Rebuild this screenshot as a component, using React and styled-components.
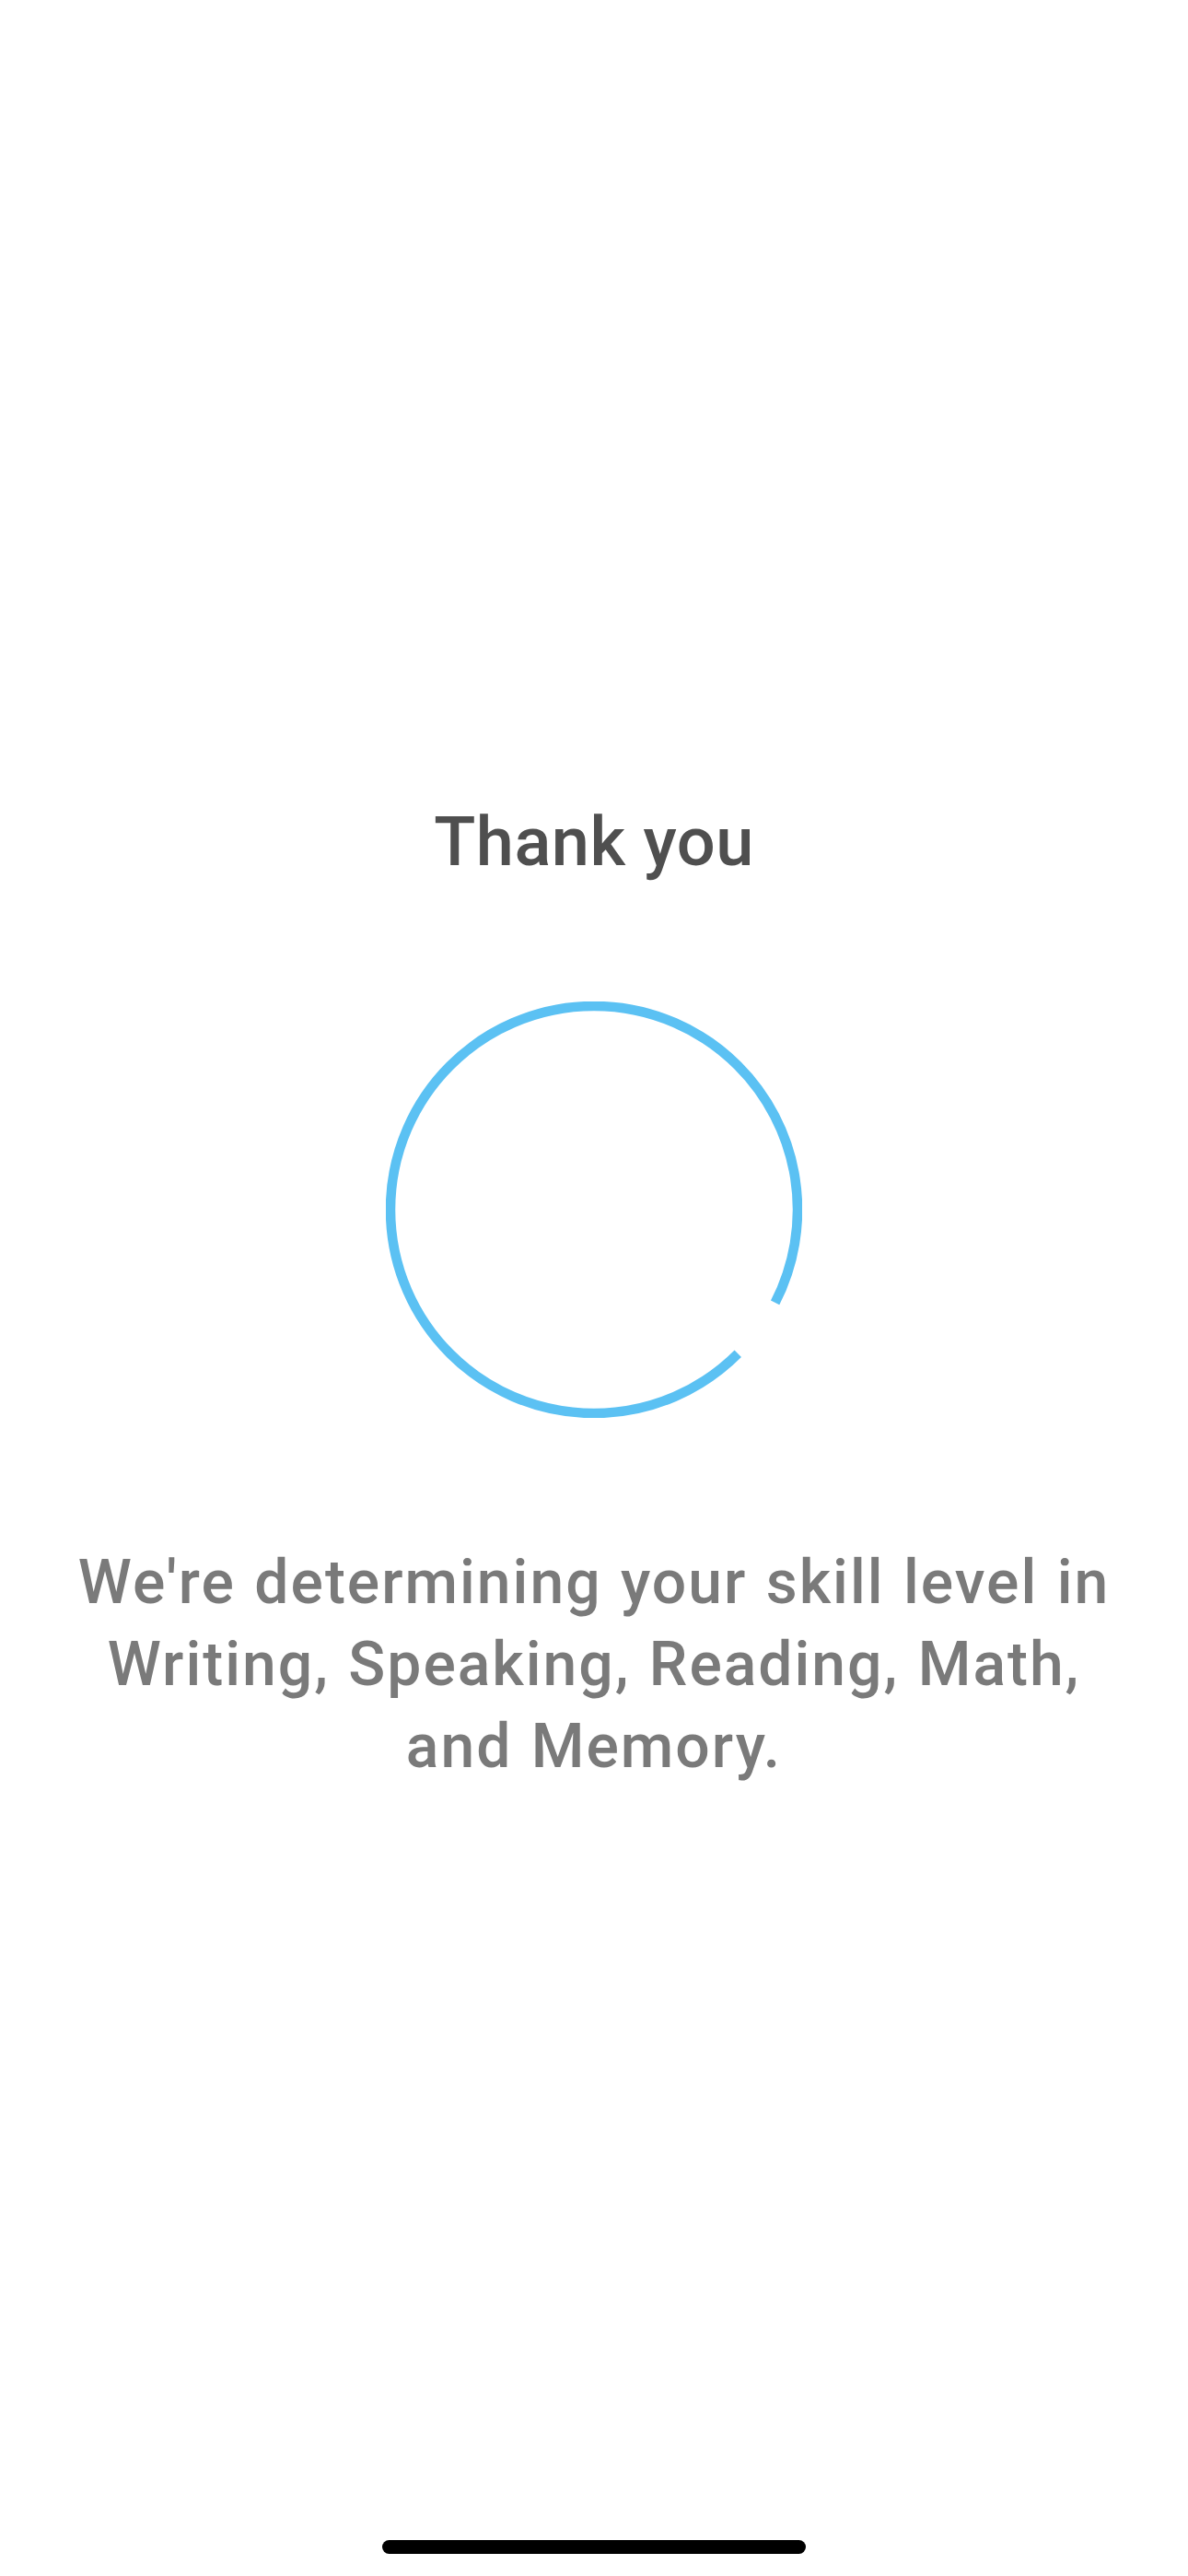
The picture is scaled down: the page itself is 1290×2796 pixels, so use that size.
import React from "react";
import styled, { createGlobalStyle } from "styled-components";

const Global = createGlobalStyle`
  html, body { margin: 0; padding: 0; background: #ffffff; }
  body { font-family: Roboto, "Noto Sans", "Liberation Sans", sans-serif; }
  * { box-sizing: border-box; }
`;

const Screen = styled.div`
  min-height: 2796px;
  width: 1290px;
  display: flex;
  flex-direction: column;
  align-items: center;
  padding-top: 877px;
  background: #ffffff;
`;

const Title = styled.h1`
  margin: 0;
  font-family: Roboto, "Noto Sans", sans-serif;
  font-weight: 500;
  font-size: 74px;
  line-height: 74px;
  color: #4f4f4f;
  letter-spacing: 0.5px;
  text-align: center;
`;

const SpinnerWrap = styled.div`
  margin-top: 136px;
  width: 452px;
  height: 452px;
`;

const Message = styled.p`
  margin: 134px 0 0;
  font-family: Roboto, "Noto Sans", sans-serif;
  font-weight: 500;
  font-size: 66px;
  line-height: 89px;
  color: #7a7a7a;
  letter-spacing: 2px;
  word-spacing: 2px;
  text-align: center;
`;

const HomeIndicator = styled.div`
  margin-top: auto;
  margin-bottom: 24px;
  width: 460px;
  height: 15px;
  border-radius: 8px;
  background: #000000;
`;

function Spinner() {
  const r = 221;
  const c = 2 * Math.PI * r;
  const arc = (c * 342) / 360;
  const gap = c - arc;
  return (
    <SpinnerWrap>
      <svg width="452" height="452" viewBox="0 0 452 452">
        <circle
          cx="226"
          cy="226"
          r={r}
          fill="none"
          stroke="#5bc1f3"
          strokeWidth="10.5"
          strokeDasharray={`${arc} ${gap}`}
          transform="rotate(45 226 226)"
        />
      </svg>
    </SpinnerWrap>
  );
}

export default function App() {
  return (
    <>
      <Global />
      <Screen>
        <Title>Thank you</Title>
        <Spinner />
        <Message>
          We're determining your skill level in
          <br />
          Writing, Speaking, Reading, Math,
          <br />
          and Memory.
        </Message>
        <HomeIndicator />
      </Screen>
    </>
  );
}
